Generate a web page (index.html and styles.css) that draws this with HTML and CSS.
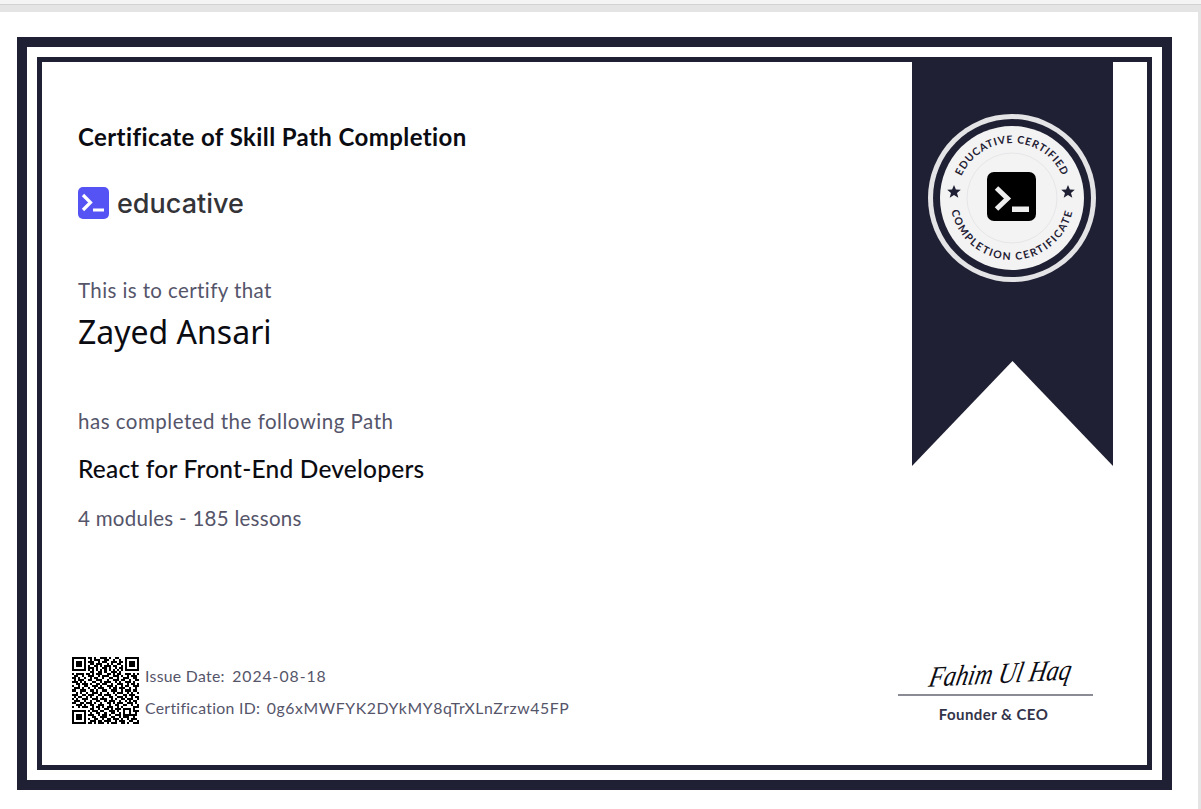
FILE: index.html
```html
<!DOCTYPE html>
<html lang="en">
<head>
  <meta charset="UTF-8">
  <title>Certificate of Skill Path Completion</title>
  <link rel="stylesheet" href="styles.css">
</head>
<body>
  <div class="viewer">
    <div class="sheet">
      <div class="frame-outer">
        <div class="frame-inner">

          <!-- Left column -->
          <div class="content">
            <h1 class="cert-title">Certificate of Skill Path Completion</h1>
            <div class="brand">
              <svg class="brand-icon" width="31" height="32" viewBox="0 0 31 32">
                <rect width="31" height="32" rx="5" fill="#5553f4"/>
                <path d="M5 8l7.500 7.500-7.500 7.500" fill="none" stroke="#fff" stroke-width="3.200"/>
                <rect x="15" y="21.500" width="11" height="3" fill="#fff"/>
              </svg>
              <span class="brand-name">educative</span>
            </div>
            <p class="label certify">This is to certify that</p>
            <p class="student">Zayed Ansari</p>
            <p class="label completed">has completed the following Path</p>
            <p class="path-name">React for Front-End Developers</p>
            <p class="label modules">4 modules - 185 lessons</p>

            <div class="footer-left">
              <svg class="qr" width="67" height="67" viewBox="0 0 33 33" shape-rendering="crispEdges">
                <path fill="none" stroke="#000" d="M.5.5h6v6h-6zM26.500.5h6v6h-6zM.5 26.500h6v6h-6z"/>
                <path d="M2 2h3v3H2zM28 2h3v3h-3zM2 28h3v3H2zM25 25h4v4h-4z"/>
                <rect x="26" y="26" width="2" height="2" fill="#fff"/>
                <path fill="none" stroke="#000" d="M8 .5h2M11 .5h1M14 .5h3M18 .5h1M21 .5h2
                  M9 1.500h1M11 1.500h3M16 1.500h2M20 1.500h1M23 1.500h1
                  M8 2.500h3M13 2.500h1M15 2.500h2M19 2.500h3M23 2.500h2
                  M9 3.500h2M12 3.500h3M17 3.500h1M19 3.500h1M22 3.500h2
                  M8 4.500h1M11 4.500h2M14 4.500h1M16 4.500h3M20 4.500h2M24 4.500h1
                  M8 5.500h3M12 5.500h1M15 5.500h2M18 5.500h1M21 5.500h1M23 5.500h2
                  M8 6.500h1M10 6.500h1M12 6.500h1M14 6.500h1M16 6.500h1M18 6.500h1M20 6.500h1M22 6.500h1M24 6.500h1
                  M9 7.500h2M13 7.500h2M16 7.500h1M19 7.500h3M23 7.500h1
                  M0 8.500h1M2 8.500h4M7 8.500h2M10 8.500h1M12 8.500h3M17 8.500h2M20 8.500h1M22 8.500h2M26 8.500h3M30 8.500h1M32 8.500h1
                  M1 9.500h2M5 9.500h1M8 9.500h3M13 9.500h1M15 9.500h3M20 9.500h3M24 9.500h1M27 9.500h1M29 9.500h3
                  M0 10.500h2M3 10.500h1M6 10.500h1M9 10.500h1M11 10.500h2M15 10.500h1M18 10.500h2M22 10.500h1M25 10.500h3M30 10.500h2
                  M1 11.500h1M3 11.500h3M8 11.500h2M12 11.500h3M17 11.500h1M20 11.500h3M24 11.500h2M28 11.500h1M31 11.500h2
                  M0 12.500h3M4 12.500h1M6 12.500h1M10 12.500h2M14 12.500h1M16 12.500h3M21 12.500h1M23 12.500h1M26 12.500h3M30 12.500h1
                  M2 13.500h2M5 13.500h3M9 13.500h1M12 13.500h2M15 13.500h2M19 13.500h1M22 13.500h3M27 13.500h1M29 13.500h2M32 13.500h1
                  M0 14.500h1M3 14.500h1M6 14.500h2M10 14.500h3M14 14.500h1M17 14.500h3M21 14.500h1M24 14.500h1M26 14.500h2M30 14.500h3
                  M1 15.500h3M5 15.500h1M8 15.500h1M11 15.500h1M13 15.500h3M18 15.500h1M20 15.500h2M23 15.500h3M28 15.500h1M31 15.500h1
                  M0 16.500h2M4 16.500h3M9 16.500h2M12 16.500h1M15 16.500h2M19 16.500h3M24 16.500h1M26 16.500h3M30 16.500h2
                  M2 17.500h1M4 17.500h1M7 17.500h1M10 17.500h3M14 17.500h1M17 17.500h1M20 17.500h1M22 17.500h3M27 17.500h1M29 17.500h1M32 17.500h1
                  M0 18.500h3M5 18.500h2M8 18.500h3M13 18.500h2M16 18.500h3M21 18.500h1M25 18.500h2M28 18.500h3
                  M1 19.500h1M3 19.500h2M7 19.500h1M9 19.500h1M12 19.500h1M15 19.500h1M18 19.500h2M22 19.500h3M26 19.500h1M29 19.500h1M31 19.500h2
                  M0 20.500h1M2 20.500h1M5 20.500h3M10 20.500h3M14 20.500h3M19 20.500h1M21 20.500h1M24 20.500h2M27 20.500h3M32 20.500h1
                  M1 21.500h3M6 21.500h1M9 21.500h1M12 21.500h2M16 21.500h1M18 21.500h3M23 21.500h1M26 21.500h1M28 21.500h1M30 21.500h2
                  M0 22.500h2M4 22.500h2M7 22.500h3M11 22.500h1M14 22.500h1M17 22.500h2M20 22.500h1M22 22.500h3M27 22.500h3M31 22.500h1
                  M2 23.500h3M6 23.500h1M9 23.500h2M13 23.500h3M18 23.500h1M21 23.500h2M25 23.500h2M29 23.500h1M32 23.500h1
                  M0 24.500h1M3 24.500h1M5 24.500h3M10 24.500h1M12 24.500h2M15 24.500h1M17 24.500h3M22 24.500h1M24 24.500h1M30 24.500h3
                  M9 25.500h2M13 25.500h1M16 25.500h2M19 25.500h1M21 25.500h3M30 25.500h1
                  M8 26.500h1M10 26.500h3M14 26.500h2M18 26.500h3M22 26.500h1M30 26.500h3
                  M9 27.500h1M12 27.500h2M16 27.500h1M19 27.500h2M23 27.500h1M31 27.500h1
                  M8 28.500h3M13 28.500h1M15 28.500h2M18 28.500h1M21 28.500h3M26 28.500h2M29 28.500h3
                  M10 29.500h2M14 29.500h3M19 29.500h2M23 29.500h1M25 29.500h3M30 29.500h1
                  M8 30.500h1M11 30.500h2M15 30.500h1M17 30.500h2M20 30.500h3M24 30.500h1M27 30.500h1M29 30.500h3
                  M9 31.500h3M13 31.500h2M16 31.500h3M21 31.500h1M23 31.500h3M28 31.500h2M32 31.500h1
                  M8 32.500h2M11 32.500h1M13 32.500h3M17 32.500h1M19 32.500h3M24 32.500h2M27 32.500h1M30 32.500h3"/>
              </svg>
              <div class="meta">
                <p>Issue Date: <span class="meta-value meta-date">2024-08-18</span></p>
                <p>Certification ID: <span class="meta-value">0g6xMWFYK2DYkMY8qTrXLnZrzw45FP</span></p>
              </div>
            </div>
          </div>

          <!-- Ribbon with badge -->
          <div class="ribbon">
            <svg class="badge" width="170" height="170" viewBox="0 0 170 170">
              <defs>
                <path id="arc-top" d="M30 85a55 55 0 0 1 110 0"/>
                <path id="arc-bottom" d="M23 85a62 62 0 0 0 124 0"/>
              </defs>
              <circle cx="85" cy="85" r="84" fill="#e4e4e6"/>
              <circle cx="85" cy="85" r="79" fill="#1f2033"/>
              <circle cx="85" cy="85" r="72" fill="#f3f3f4"/>
              <circle cx="85" cy="85" r="45" fill="none" stroke="#e6e6e8" stroke-width="1"/>
              <text class="badge-text badge-top"><textPath href="#arc-top" startOffset="50%" text-anchor="middle">EDUCATIVE CERTIFIED</textPath></text>
              <text class="badge-text badge-bottom"><textPath href="#arc-bottom" startOffset="50%" text-anchor="middle">COMPLETION CERTIFICATE</textPath></text>
              <path d="M27 72l1.900 4.500 4.900.3-3.800 3.100 1.300 4.800-4.300-2.700-4.300 2.700 1.300-4.800-3.800-3.100 4.900-.3zM141 72l1.900 4.500 4.900.3-3.800 3.100 1.300 4.800-4.300-2.700-4.300 2.700 1.300-4.800-3.800-3.100 4.900-.3z" fill="#1f2033"/>
              <rect x="60" y="59" width="49" height="49" rx="7" fill="#000"/>
              <path d="M69.500 75l11 10.500-11 10.500" fill="none" stroke="#eeeeee" stroke-width="5"/>
              <rect x="85" y="93.500" width="17" height="5.500" fill="#eeeeee"/>
            </svg>
            <svg class="ribbon-notch" width="201" height="105" viewBox="0 0 201 105" preserveAspectRatio="none">
              <path d="M0 105L100.500 0 201 105z" fill="#fff"/>
            </svg>
          </div>

          <div class="signature">
            <div class="sign-line"><span class="sign-name">Fahim Ul Haq</span></div>
            <span class="sign-role">Founder &amp; CEO</span>
          </div>

        </div>
      </div>
    </div>
  </div>
</body>
</html>
```

FILE: styles.css
```css
* {
  margin: 0;
  padding: 0;
  box-sizing: border-box;
}
body {
  font-family: "Lato", Arial, sans-serif;
  background-color: #fff;
  overflow: hidden;
}
.viewer {
  width: 1201px;
  height: 809px;
  background-color: #e4e4e4;
  padding: 12px 3px 0 0;
  box-shadow: inset 0 4px 0 #f4f4f4, inset 0 5px 0 #d2d2d2;
}
.sheet {
  height: 797px;
  background-color: #fff;
  padding: 25px 0 0 17px;
}
.frame-outer {
  width: 1155px;
  height: 753px;
  border: 10px solid #1f2033;
  padding: 10px;
}
.frame-inner {
  position: relative;
  height: 713px;
  border: 5px solid #1f2033;
  overflow: hidden;
}
.content {
  padding: 60px 0 0 36px;
}
.cert-title {
  font-size: 24px;
  line-height: 30px;
  font-weight: 700;
  letter-spacing: 0.4px;
  color: #0b0b12;
}
.brand {
  display: flex;
  align-items: center;
  gap: 8px;
  margin-top: 35px;
}
.brand-name {
  font-family: "Inter", sans-serif;
  font-size: 27px;
  font-weight: 500;
  line-height: 31px;
  color: #333338;
}
.label {
  font-size: 20.500px;
  line-height: 26px;
  letter-spacing: 0.4px;
  color: #55556a;
}
.certify {
  margin-top: 58px;
}
.student {
  font-family: "Noto Sans", sans-serif;
  font-size: 32px;
  line-height: 42px;
  color: #0b0b12;
  margin-top: 8px;
}
.completed {
  margin-top: 55px;
  letter-spacing: 0.5px;
}
.path-name {
  font-size: 24.500px;
  line-height: 30px;
  font-weight: 500;
  letter-spacing: 0.2px;
  color: #0b0b12;
  margin-top: 20px;
}
.modules {
  margin-top: 21px;
  letter-spacing: 0.27px;
}
.footer-left {
  position: absolute;
  left: 30px;
  top: 595px;
  display: flex;
  align-items: center;
  gap: 6px;
}
.qr {
  display: block;
}
.meta {
  display: flex;
  flex-direction: column;
  gap: 13px;
  margin-top: 1px;
  font-size: 15.800px;
  line-height: 19px;
  letter-spacing: 0.3px;
  color: #55556a;
}
.meta-value {
  letter-spacing: 0.6px;
  margin-left: 2px;
}
.meta-date {
  letter-spacing: 0.95px;
  margin-left: 3px;
}
.ribbon {
  position: absolute;
  left: 870px;
  top: 0;
  width: 201px;
  height: 404px;
  background-color: #1f2033;
}
.badge {
  position: absolute;
  left: 15px;
  top: 51px;
}
.badge-text {
  font-family: "Lato", sans-serif;
  font-size: 10.500px;
  font-weight: 700;
  fill: #1f2033;
}
.badge-top {
  letter-spacing: 0.8px;
}
.badge-bottom {
  letter-spacing: 1.500px;
}
.ribbon-notch {
  position: absolute;
  left: 0;
  bottom: 0;
  display: block;
}
.signature {
  position: absolute;
  left: 856px;
  top: 594px;
  width: 195px;
  text-align: center;
}
.sign-line {
  height: 40px;
  border-bottom: 2px solid #8a8b95;
  white-space: nowrap;
}
.sign-name {
  display: inline-block;
  margin-left: 10px;
  font-family: "Liberation Serif", serif;
  font-style: italic;
  font-size: 29px;
  line-height: 34px;
  color: #0b0b12;
  transform: rotate(-3deg) skewX(-14deg) scaleX(0.84);
}
.sign-role {
  display: block;
  font-size: 15px;
  font-weight: 700;
  line-height: 20px;
  letter-spacing: 0.45px;
  color: #33344a;
  margin-top: 8px;
  margin-right: 4px;
}
```
